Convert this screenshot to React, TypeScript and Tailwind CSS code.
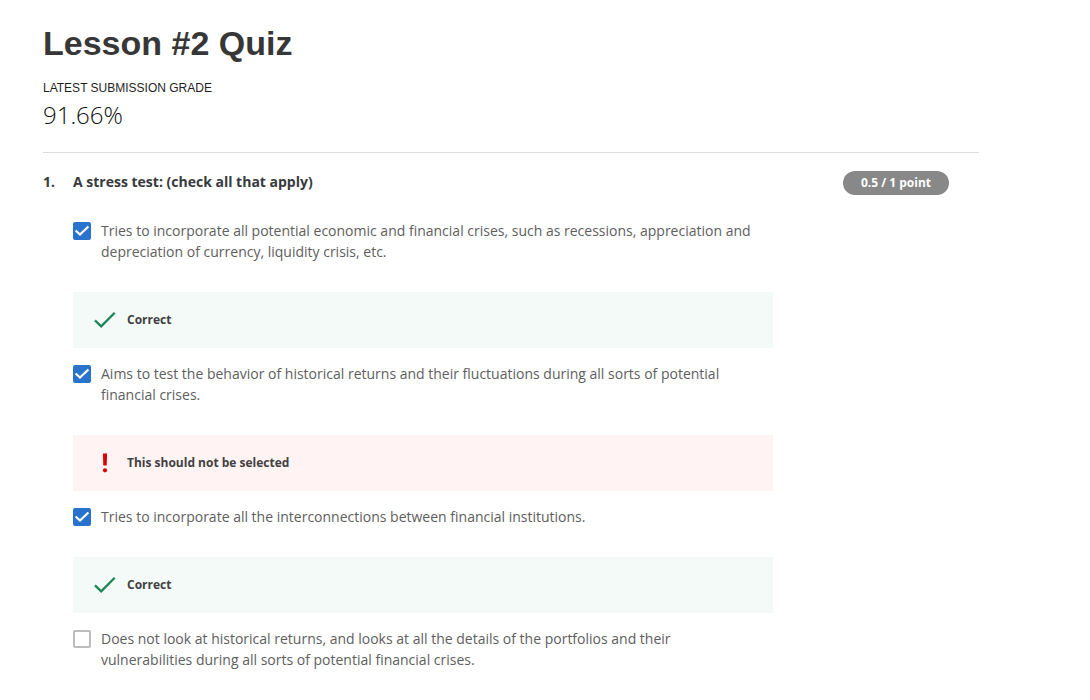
import { useState } from "react";

type Result = "correct" | "wrong";

interface Option {
  id: string;
  text: string;
  checked: boolean;
  result?: Result;
}

const OPTIONS: Option[] = [
  {
    id: "crises",
    text: "Tries to incorporate all potential economic and financial crises, such as recessions, appreciation and depreciation of currency, liquidity crisis, etc.",
    checked: true,
    result: "correct",
  },
  {
    id: "historical",
    text: "Aims to test the behavior of historical returns and their fluctuations during all sorts of potential financial crises.",
    checked: true,
    result: "wrong",
  },
  {
    id: "interconnections",
    text: "Tries to incorporate all the interconnections between financial institutions.",
    checked: true,
    result: "correct",
  },
  {
    id: "portfolios",
    text: "Does not look at historical returns, and looks at all the details of the portfolios and their vulnerabilities during all sorts of potential financial crises.",
    checked: false,
  },
];

function Feedback({ result }: { result: Result }) {
  const correct = result === "correct";
  return (
    <div
      className={`flex h-14 items-center gap-2.5 px-5 ${correct ? "bg-[#f4faf8]" : "bg-[#fff3f4]"}`}
    >
      <svg viewBox="0 0 24 24" className="size-6" aria-hidden="true">
        {correct ? (
          <path d="M2 12.3 8.2 18.3 21.7 4.7" fill="none" stroke="#1d8656" strokeWidth="2.3" />
        ) : (
          <g fill="#d90009">
            <path d="M9.9 2.5h4.2l-.4 12h-3.4z" />
            <circle cx="12" cy="19.3" r="2.1" />
          </g>
        )}
      </svg>
      <p className="text-xs font-bold text-[#414141]">
        {correct ? "Correct" : "This should not be selected"}
      </p>
    </div>
  );
}

function OptionRow({ option }: { option: Option }) {
  const [checked, setChecked] = useState(option.checked);
  return (
    <li>
      <div className="flex items-start gap-2.5">
        <span className="mt-0.5 grid size-[18px] shrink-0">
          <input
            id={option.id}
            type="checkbox"
            checked={checked}
            onChange={(e) => setChecked(e.target.checked)}
            className="peer col-start-1 row-start-1 size-[18px] appearance-none rounded-xs border-2 border-[#bdbdbd] bg-white checked:border-[#2a73cc] checked:bg-[#2a73cc]"
          />
          <svg
            viewBox="0 0 18 18"
            className="pointer-events-none invisible col-start-1 row-start-1 size-[18px] peer-checked:visible"
            aria-hidden="true"
          >
            <path d="M2.6 8.4 7 12.6 15.4 4.4" fill="none" stroke="#fff" strokeWidth="2.1" />
          </svg>
        </span>
        <label htmlFor={option.id} className="max-w-[660px] text-sm leading-[21px] text-[#5e5e5e]">
          {option.text}
        </label>
      </div>
      {option.result && (
        <div className="mt-[30px] mb-[15px]">
          <Feedback result={option.result} />
        </div>
      )}
    </li>
  );
}

export default function App() {
  return (
    <main className="min-h-screen bg-white pt-5 pr-[111px] pl-[43px] font-['Open_Sans',sans-serif] text-[#373a3c]">
      <header className="border-b border-[#dedede] pb-[21px]">
        <h1 className="font-['Liberation_Sans',Arial,sans-serif] text-[34px] leading-[46px] font-bold text-[#373737]">
          Lesson #2 Quiz
        </h1>
        <p className="mt-3.5 font-['Liberation_Sans',Arial,sans-serif] text-xs leading-4 text-[#1f1f1f]">
          LATEST SUBMISSION GRADE
        </p>
        <p className="mt-[3px] text-2xl leading-8 font-light text-[#111]">91.66%</p>
      </header>

      <section className="flex items-start pt-[18px] pr-[30px]">
        <span className="w-[30px] shrink-0 text-sm leading-[22px] font-bold">1.</span>
        <div className="min-w-0 grow">
          <div className="flex items-start justify-between">
            <h2 className="text-sm leading-[22px] font-bold">A stress test: (check all that apply)</h2>
            <span className="flex h-6 w-[106px] items-center justify-center rounded-full bg-[#888] text-xs font-bold text-white">
              0.5 / 1 point
            </span>
          </div>
          <ul className="mt-[25px] max-w-[700px]">
            {OPTIONS.map((option) => (
              <OptionRow key={option.id} option={option} />
            ))}
          </ul>
        </div>
      </section>
    </main>
  );
}
